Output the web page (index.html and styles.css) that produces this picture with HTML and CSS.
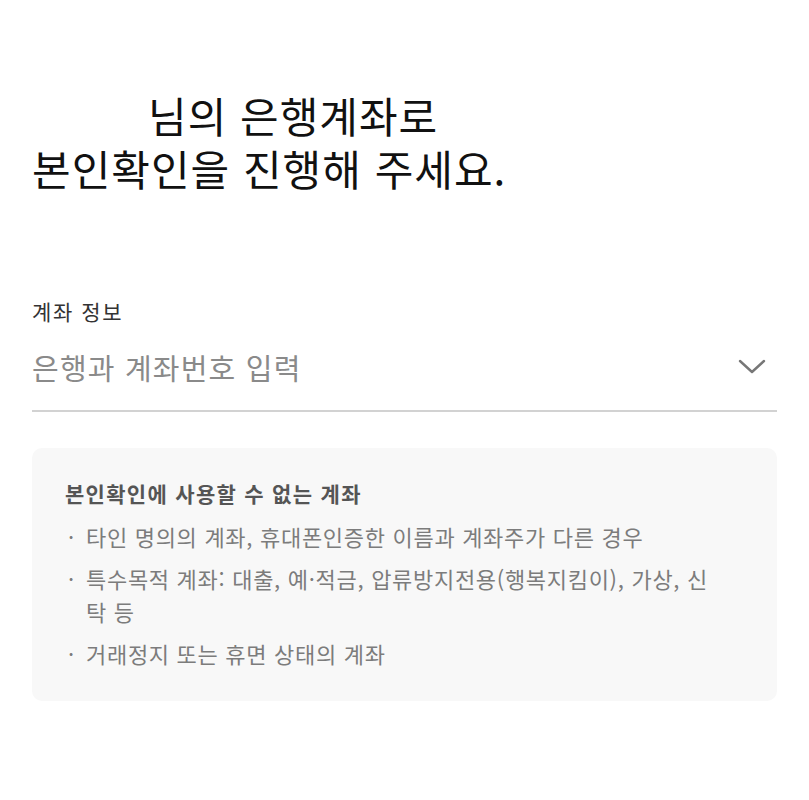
FILE: index.html
```html
<!DOCTYPE html>
<html lang="ko">
<head>
    <meta charset="UTF-8">
    <meta name="viewport" content="width=device-width, initial-scale=1.0">
    <title>본인확인</title>
    <link rel="stylesheet" href="styles.css">
</head>
<body>
    <h1 class="headline">
        <span class="name"></span>님의 은행계좌로<br>
        본인확인을 진행해 주세요.
    </h1>

    <div class="field">
        <div class="field-label">계좌 정보</div>
        <div class="select">
            <span class="placeholder">은행과 계좌번호 입력</span>
            <svg class="chevron" width="28" height="18" viewBox="0 0 28 18">
                <polyline points="2,3 14,14 26,3" fill="none" stroke="#777" stroke-width="2.4" stroke-linecap="round" stroke-linejoin="round"/>
            </svg>
        </div>
    </div>

    <div class="notice">
        <div class="notice-title">본인확인에 사용할 수 없는 계좌</div>
        <ul class="notice-list">
            <li><span class="dot">·</span><span>타인 명의의 계좌, 휴대폰인증한 이름과 계좌주가 다른 경우</span></li>
            <li><span class="dot">·</span><span>특수목적 계좌: 대출, 예·적금, 압류방지전용(행복지킴이), 가상, 신탁 등</span></li>
            <li><span class="dot">·</span><span>거래정지 또는 휴면 상태의 계좌</span></li>
        </ul>
    </div>
</body>
</html>
```

FILE: styles.css
```css
body {
    margin: 0;
    padding: 0 32px;
    background-color: white;
    color: #111;
    font-family: "Noto Sans CJK KR", "Noto Sans", sans-serif;
}

.headline {
    margin: 88px 0 0;
    font-size: 42px;
    font-weight: 400;
    line-height: 53px;
    letter-spacing: 1px;
    color: #111;
}

.name {
    display: inline-block;
    width: 116px;
}

.field {
    margin-top: 103px;
}

.field-label {
    font-size: 21px;
    line-height: 28px;
    letter-spacing: 1.6px;
    color: #333;
}

.select {
    display: flex;
    align-items: center;
    justify-content: space-between;
    margin-top: 22px;
    padding-bottom: 23px;
    border-bottom: 2px solid #d2d2d2;
}

.placeholder {
    font-size: 29px;
    line-height: 40px;
    letter-spacing: 1.2px;
    color: #8a8a8a;
}

.chevron {
    margin-right: 11px;
}

.notice {
    margin-top: 36px;
    padding: 30px 56px 31px 33px;
    background-color: #f8f8f8;
    border-radius: 10px;
}

.notice-title {
    font-size: 21px;
    line-height: 30px;
    font-weight: 700;
    letter-spacing: 1.3px;
    color: #555;
}

.notice-list {
    list-style: none;
    margin: 12px 0 0;
    padding: 0;
}

.notice-list li {
    display: flex;
    font-size: 22px;
    line-height: 33px;
    letter-spacing: 0.7px;
    color: #7c7c7c;
    margin-bottom: 9px;
}

.notice-list li:last-child {
    margin-bottom: 0;
}

.dot {
    flex: none;
    width: 18px;
    padding-left: 3px;
}
```
